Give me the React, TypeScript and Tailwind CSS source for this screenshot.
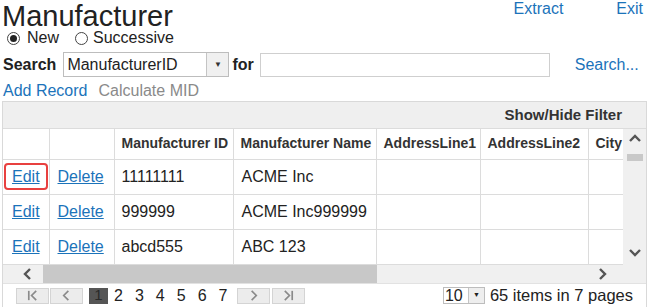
import React from "react";

const LINK = "text-[#1b73ba]";

const COLS = [
  { label: "", w: 46 },
  { label: "", w: 65 },
  { label: "Manufacturer ID", w: 119 },
  { label: "Manufacturer Name", w: 143 },
  { label: "AddressLine1", w: 104 },
  { label: "AddressLine2", w: 108 },
  { label: "City", w: 60 },
];

const ROWS = [
  { id: "11111111", name: "ACME Inc" },
  { id: "999999", name: "ACME Inc999999" },
  { id: "abcd555", name: "ABC 123" },
];

function Chevron({ dir, className }: { dir: "up" | "down" | "left" | "right"; className?: string }) {
  const pts: Record<string, string> = {
    up: "2,9 7,4 12,9",
    down: "2,5 7,10 12,5",
    left: "9,2 4,7 9,12",
    right: "5,2 10,7 5,12",
  };
  return (
    <svg viewBox="0 0 14 14" className={className} fill="none" stroke="#555" strokeWidth={2.4}>
      <polyline points={pts[dir]} />
    </svg>
  );
}

function Radio({ checked }: { checked?: boolean }) {
  return (
    <span className="flex h-[13px] w-[13px] items-center justify-center rounded-full border border-[#444] bg-white">
      {checked && <span className="h-[7px] w-[7px] rounded-full bg-[#222]" />}
    </span>
  );
}

function PagerButton({ children }: { children: React.ReactNode }) {
  return (
    <span className="flex h-[16px] w-[33px] items-center justify-center border border-[#d4d4d4] bg-[#ececec]">
      {children}
    </span>
  );
}

export default function App() {
  return (
    <div className="h-[307px] w-[649px] overflow-hidden bg-white font-['Liberation_Sans',Arial,sans-serif] text-[16px] text-[#222]">
      {/* Title bar */}
      <div className="flex h-[30px] items-start justify-between">
        <h1 className="ml-[2px] text-[29px] leading-[32px] text-[#222]">Manufacturer</h1>
        <div className="mr-[6px] flex gap-[53px] leading-[18px]">
          <span className={LINK}>Extract</span>
          <span className={LINK}>Exit</span>
        </div>
      </div>

      {/* Mode radios */}
      <div className="flex h-[16px] items-center pl-[7px] leading-[16px]">
        <Radio checked />
        <span className="ml-[7px]">New</span>
        <span className="ml-[16px]">
          <Radio />
        </span>
        <span className="ml-[5px]">Successive</span>
      </div>

      {/* Search row */}
      <div className="mt-[6px] flex h-[25px] items-center">
        <span className="ml-[3px] font-bold">Search</span>
        <div className="ml-[7px] flex h-[25px] w-[166px] border border-[#bdbdbd]">
          <span className="flex-1 pl-[3px] leading-[23px]">ManufacturerID</span>
          <span className="flex w-[22px] items-center justify-center border-l border-[#c4c4c4] bg-[#f0f0f0] text-[8px] text-[#333]">
            ▼
          </span>
        </div>
        <span className="ml-[3px] font-bold">for</span>
        <div className="ml-[6px] h-[24px] w-[290px] border border-[#cfcfcf] bg-white" />
        <span className={`ml-[25px] ${LINK}`}>Search...</span>
      </div>

      {/* Actions */}
      <div className="mt-[4px] flex h-[20px] items-center pl-[3px]">
        <span className={LINK}>Add Record</span>
        <span className="ml-[11px] text-[#8a8a8a]">Calculate MID</span>
      </div>

      {/* Grid */}
      <div className="ml-[2px] w-[645px] border border-[#d9d9d9]">
        <div className="flex h-[27px] items-center justify-end border-b border-[#dcdcdc] bg-[#efefef] pr-[24px] text-[15px] font-bold text-[#333]">
          Show/Hide Filter
        </div>

        <div className="flex">
          <div className="w-[620px] overflow-hidden">
            <table className="table-fixed border-collapse" style={{ width: 645 }}>
              <colgroup>
                {COLS.map((c, i) => (
                  <col key={i} style={{ width: c.w }} />
                ))}
              </colgroup>
              <thead>
                <tr className="h-[30px]">
                  {COLS.map((c, i) => (
                    <th
                      key={i}
                      className="whitespace-nowrap border-r border-b border-[#dcdcdc] px-[7px] text-left text-[14px] font-bold text-[#333]"
                    >
                      {c.label}
                    </th>
                  ))}
                </tr>
              </thead>
              <tbody>
                {ROWS.map((r, i) => (
                  <tr key={i} className="h-[35px]">
                    <td className="border-r border-b border-[#dcdcdc] px-[1px]">
                      <span
                        className={`inline-flex h-[27px] items-center rounded-[4px] border-2 px-[6px] underline ${LINK} ${
                          i === 0 ? "border-[#e8403f]" : "border-transparent"
                        }`}
                      >
                        Edit
                      </span>
                    </td>
                    <td className={`border-r border-b border-[#dcdcdc] px-[8px] underline ${LINK}`}>Delete</td>
                    <td className="border-r border-b border-[#dcdcdc] px-[7px]">{r.id}</td>
                    <td className="whitespace-nowrap border-r border-b border-[#dcdcdc] px-[8px]">{r.name}</td>
                    <td className="border-r border-b border-[#dcdcdc]" />
                    <td className="border-r border-b border-[#dcdcdc]" />
                    <td className="border-r border-b border-[#dcdcdc]" />
                  </tr>
                ))}
              </tbody>
            </table>
          </div>

          {/* Vertical scrollbar */}
          <div className="flex w-[23px] flex-col items-center bg-[#f0f0f0] pt-[3px]">
            <Chevron dir="up" className="h-[14px] w-[14px]" />
            <div className="mt-[8px] h-[7px] w-[16px] bg-[#c8c8c8]" />
            <div className="flex-1" />
            <Chevron dir="down" className="mb-[6px] h-[14px] w-[14px]" />
          </div>
        </div>

        {/* Horizontal scrollbar */}
        <div className="flex h-[18px] items-center bg-[#f0f0f0]">
          <div className="flex w-[40px] justify-center pl-[10px]">
            <Chevron dir="left" className="h-[14px] w-[14px]" />
          </div>
          <div className="h-[18px] w-[334px] bg-[#c8c8c8]" />
          <div className="flex flex-1 justify-end pr-[37px]">
            <Chevron dir="right" className="h-[14px] w-[14px]" />
          </div>
        </div>

        {/* Pager */}
        <div className="flex h-[25px] items-center border-t border-[#e2e2e2] pl-[13px]">
          <PagerButton>
            <svg viewBox="0 0 14 14" className="h-[13px] w-[13px]" fill="none" stroke="#8a8a8a" strokeWidth={1.8}>
              <line x1="3" y1="2" x2="3" y2="12" />
              <polyline points="11,2 6,7 11,12" />
            </svg>
          </PagerButton>
          <span className="ml-[1px]">
            <PagerButton>
              <svg viewBox="0 0 14 14" className="h-[13px] w-[13px]" fill="none" stroke="#8a8a8a" strokeWidth={1.8}>
                <polyline points="9,2 4,7 9,12" />
              </svg>
            </PagerButton>
          </span>
          <span className="ml-[6px] flex h-[16px] w-[19px] items-center justify-center bg-[#555] text-[15px] text-[#2a2a2a]">
            1
          </span>
          {[2, 3, 4, 5, 6, 7].map((n) => (
            <span key={n} className={`${n === 2 ? "ml-[6px]" : "ml-[12px]"} text-[16px] leading-[16px]`}>
              {n}
            </span>
          ))}
          <span className="ml-[10px]">
            <PagerButton>
              <svg viewBox="0 0 14 14" className="h-[13px] w-[13px]" fill="none" stroke="#8a8a8a" strokeWidth={1.8}>
                <polyline points="5,2 10,7 5,12" />
              </svg>
            </PagerButton>
          </span>
          <span className="ml-[2px]">
            <PagerButton>
              <svg viewBox="0 0 14 14" className="h-[13px] w-[13px]" fill="none" stroke="#8a8a8a" strokeWidth={1.8}>
                <polyline points="3,2 8,7 3,12" />
                <line x1="11" y1="2" x2="11" y2="12" />
              </svg>
            </PagerButton>
          </span>
          <div className="ml-auto flex items-center pr-[13px]">
            <div className="flex h-[17px] w-[42px] border border-[#bdbdbd]">
              <span className="flex-1 pl-[1px] text-[16px] leading-[15px]">10</span>
              <span className="flex w-[16px] items-center justify-center border-l border-[#c4c4c4] bg-[#eee] text-[7px]">
                ▼
              </span>
            </div>
            <span className="ml-[5px] text-[16.5px]">65 items in 7 pages</span>
          </div>
        </div>
      </div>
    </div>
  );
}
